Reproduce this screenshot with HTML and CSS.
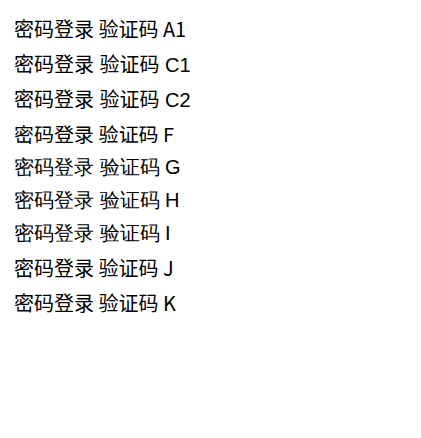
FILE: index.html
```html
<!DOCTYPE html>
<html>
<head>
<meta charset="utf-8">
<link rel="stylesheet" href="styles.css">
</head>
<body>
<p class="a">密码登录 验证码 A1</p>
<p class="c">密码登录 验证码 C1</p>
<p class="c">密码登录 验证码 C2</p>
<p class="f">密码登录 验证码 F</p>
<p class="g">密码登录 验证码 G</p>
<p class="h" lang="zh-CN">密码登录 验证码 H</p>
<p class="i" lang="ja">密码登录 验证码 I</p>
<p class="j">密码登录 验证码 J</p>
<p class="k">密码登录 验证码 K</p>
</body>
</html>
```
FILE: styles.css
```css
p { font-size: 20px; margin: 6px; }
.a { font-family: "Noto Sans CJK SC", sans-serif; }
.c { font-family: "Liberation Sans", "Noto Sans CJK SC", sans-serif; }
.f { font-family: "Noto Sans SC", sans-serif; }
.g { font-family: "Source Han Sans SC", sans-serif; }
.h { font-family: sans-serif; }
.i { font-family: sans-serif; }
.j { font-family: "Noto Sans CJK KR", sans-serif; }
.k { font-family: "Noto Sans CJK SC"; font-weight: 400; }
```
